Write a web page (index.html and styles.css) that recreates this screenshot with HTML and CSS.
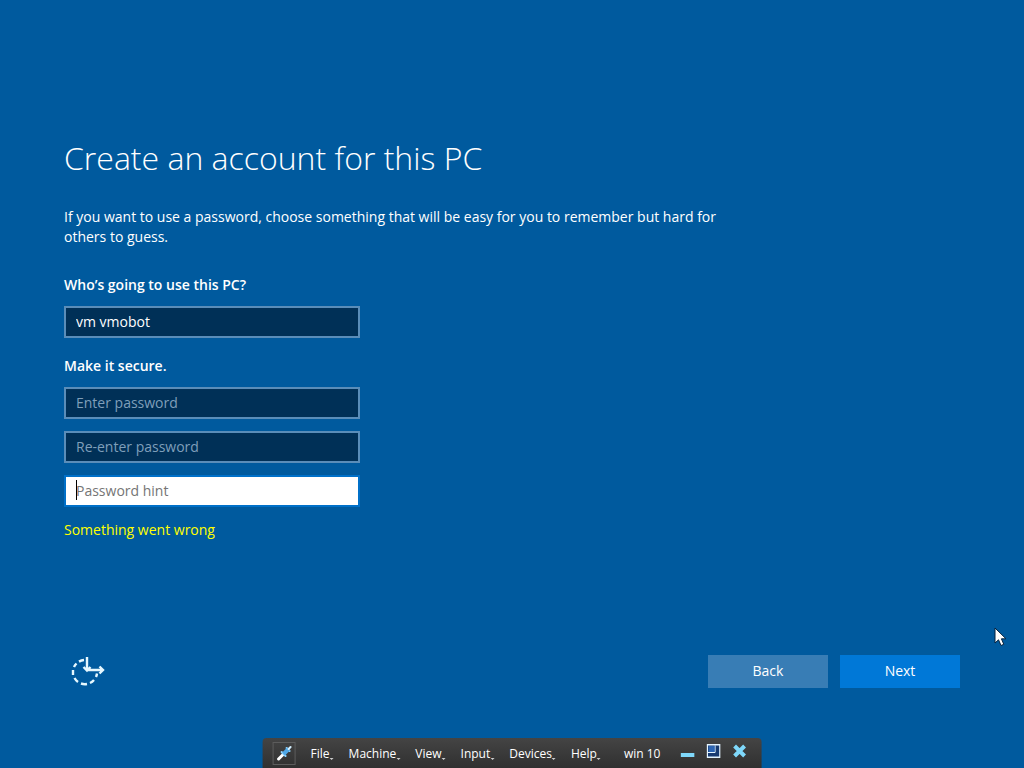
FILE: index.html
```html
<!DOCTYPE html>
<html lang="en">
<head>
    <meta charset="UTF-8">
    <meta name="viewport" content="width=device-width, initial-scale=1.0">
    <title>Create an account for this PC</title>
    <link rel="stylesheet" href="styles.css">
</head>
<body>
    <form class="setup">
        <main class="content">
            <h1>Create an account for this PC</h1>
            <p class="intro">If you want to use a password, choose something that will be easy for you to remember but hard for others to guess.</p>

            <div class="group">
                <label class="group-title" for="userName">Who’s going to use this PC?</label>
                <input class="field" type="text" id="userName" value="vm vmobot">
            </div>

            <div class="group" role="group" aria-labelledby="secureTitle">
                <h2 class="group-title" id="secureTitle">Make it secure.</h2>
                <input class="field" type="password" placeholder="Enter password" aria-label="Enter password">
                <input class="field" type="password" placeholder="Re-enter password" aria-label="Re-enter password">
                <div class="active-field">
                    <input class="field" type="text" placeholder="Password hint" aria-label="Password hint">
                </div>
            </div>
            <p class="error">Something went wrong</p>
        </main>

        <footer class="footer">
            <button class="ease-btn" type="button" aria-label="Ease of Access">
                <svg width="36" height="32" viewBox="0 0 36 32" fill="none" stroke="#e6f8ff" stroke-width="2.400">
                    <path d="M14 4A12 12 0 0 0 9 5.600M6.500 7.500A12 12 0 0 0 4 11M3 14V19M4.500 22A12 12 0 0 0 8 26M11 27.500A12 12 0 0 0 17 28M20 27A12 12 0 0 0 24 24M26 21A12 12 0 0 0 27 17.500"/>
                    <path d="M17 1V14M13.500 11L17 14.500L20.500 11M18 14H33M29.500 10.500L33 14L29.500 17.500"/>
                </svg>
            </button>
            <div class="actions">
                <button class="btn" type="button">Back</button>
                <button class="btn btn-primary" type="button">Next</button>
            </div>
        </footer>
    </form>

    <nav class="vm-bar">
        <button class="pin" type="button" aria-label="Pin toolbar">
            <svg width="16" height="16" viewBox="0 0 16 16">
                <path d="M2 14L7 9" stroke="#fff" stroke-width="3" stroke-linecap="round"/>
                <path d="M5 7L9 11M10 3L13 6" stroke="#8fd4ff" stroke-width="2" stroke-linecap="round"/>
                <path d="M7 9L12 4" stroke="#4fa8e8" stroke-width="4"/>
                <path d="M12 4L14 2" stroke="#d5f0ff" stroke-width="2" stroke-linecap="round"/>
            </svg>
        </button>
        <button class="menu" type="button">File</button>
        <button class="menu" type="button">Machine</button>
        <button class="menu" type="button">View</button>
        <button class="menu" type="button">Input</button>
        <button class="menu" type="button">Devices</button>
        <button class="menu" type="button">Help</button>
        <span class="vm-name">win 10</span>
        <div class="window-btns">
            <button type="button" aria-label="Minimize">
                <svg width="14" height="14" viewBox="0 0 14 14"><path d="M0 9H14V13H0Z" fill="#7fd8fa"/></svg>
            </button>
            <button type="button" aria-label="Restore">
                <svg width="14" height="14" viewBox="0 0 14 14" fill="none" stroke="#e4f4ff">
                    <path d="M.700 .700H13.300V13.300H.700Z" fill="#173a70" stroke-width="1.400"/>
                    <path d="M1.400 8.500H8.500V1.400" fill="#2c65b4"/>
                    <path d="M2 2H8V8H2Z" fill="#2c65b4" stroke="none"/>
                </svg>
            </button>
            <button type="button" aria-label="Close">
                <svg width="14" height="14" viewBox="0 0 14 14"><path d="M2 2L12 12M12 2L2 12" stroke="#7fd8fa" stroke-width="4"/></svg>
            </button>
        </div>
    </nav>

    <svg class="cursor" width="14" height="20" viewBox="0 0 14 20">
        <path d="M1 1V16L4.500 12.800L7 18.500L9.800 17.300L7.400 11.800H12Z" fill="#fff" stroke="#06233f"/>
    </svg>
</body>
</html>
```

FILE: styles.css
```css
* {
    margin: 0;
    padding: 0;
    box-sizing: border-box;
}

body {
    font-family: "Segoe UI", "Open Sans", "Noto Sans", sans-serif;
    font-size: 14px;
    line-height: 20px;
    color: #fff;
    background: #005a9e;
}

button,
input {
    font: inherit;
    color: inherit;
    border: none;
    background: none;
}

.setup {
    display: flex;
    flex-direction: column;
    min-height: 100vh;
    padding: 134px 64px 80px;
}

.content {
    flex: 1;
    max-width: 664px;
}

h1 {
    font-size: 32px;
    font-weight: 300;
    line-height: 48px;
    margin-bottom: 25px;
}

.intro {
    margin-bottom: 28px;
}

.group {
    display: flex;
    flex-direction: column;
    gap: 12px;
    max-width: 296px;
    margin-bottom: 18px;
}

.group-title {
    font-size: 14px;
    font-weight: 600;
    line-height: 19px;
}

.field {
    width: 100%;
    height: 32px;
    padding: 0 10px 2px;
    border: 2px solid #5a8db9;
    background: #003057;
}

.field::placeholder {
    color: #7f9fba;
    opacity: 1;
}

.active-field {
    position: relative;
}

.active-field .field {
    display: block;
    color: #000;
    border-color: #0070c8;
    background: #fff;
}

.active-field .field::placeholder {
    color: #757575;
}

/* text caret */
.active-field::before {
    content: "";
    position: absolute;
    left: 12px;
    top: 5px;
    width: 1px;
    height: 20px;
    background: #000;
}

.error {
    margin-top: -5px;
    color: #ff0;
}

.footer {
    display: flex;
    align-items: center;
    justify-content: space-between;
    padding-left: 6px;
}

.ease-btn svg {
    display: block;
}

.actions {
    display: flex;
    gap: 12px;
}

.btn {
    width: 120px;
    height: 33px;
    padding-bottom: 2px;
    background: #387db5;
}

.btn-primary {
    background: #0078d7;
}

.vm-bar {
    position: fixed;
    bottom: 0;
    left: 50%;
    transform: translateX(-50%);
    display: flex;
    align-items: center;
    gap: 15px;
    height: 30px;
    padding: 0 15px 0 10px;
    border-radius: 4px 4px 0 0;
    font-size: 12px;
    white-space: nowrap;
    background: linear-gradient(#444, #303030);
}

.pin {
    display: flex;
    align-items: center;
    justify-content: center;
    width: 23px;
    height: 23px;
    border: 1px solid #5c5c5c;
}

.menu,
.vm-name {
    padding-top: 2px;
}

.menu::after {
    content: "";
    display: inline-block;
    vertical-align: -2px;
    border: 2px solid transparent;
    border-top-color: #ccc;
    border-bottom: none;
}

.vm-name {
    margin-left: 8px;
}

.window-btns {
    display: flex;
    gap: 12px;
    margin-left: 5px;
    padding-bottom: 4px;
}

.window-btns svg {
    display: block;
}

.cursor {
    position: absolute;
    left: 994px;
    top: 627px;
}
```
